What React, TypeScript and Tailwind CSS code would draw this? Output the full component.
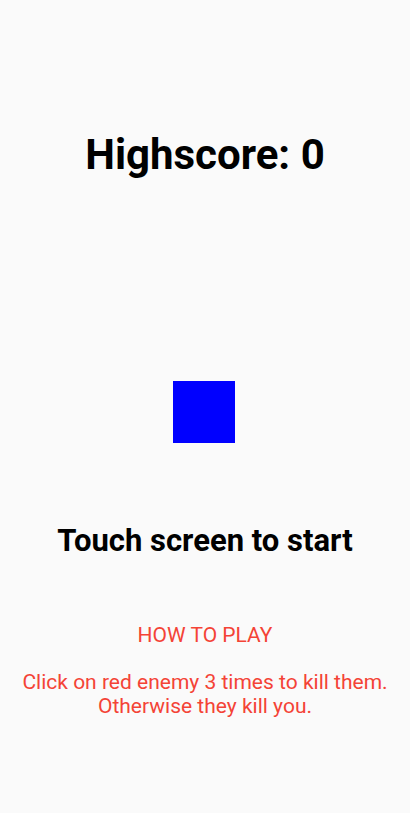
export default function App() {
  return (
    <div className="w-[410px] h-[813px] bg-[#fafafa] flex flex-col items-center" style={{ fontFamily: "Roboto, sans-serif" }}>
      <div className="mt-[129px] text-[42px] font-bold leading-[52px] text-black">Highscore: 0</div>
      <div className="mt-[200px] w-[62px] h-[62px] bg-[#0000ff] mr-[2px]"></div>
      <div className="mt-[78px] text-[31px] font-bold leading-[40px] text-black">Touch screen to start</div>
      <div className="mt-[62px] text-[21px] leading-[24px] text-[#f44336]">HOW TO PLAY</div>
      <div className="mt-[23px] text-[21px] leading-[24px] text-[#f44336] text-center">
        Click on red enemy 3 times to kill them.
        <br />
        Otherwise they kill you.
      </div>
    </div>
  );
}
